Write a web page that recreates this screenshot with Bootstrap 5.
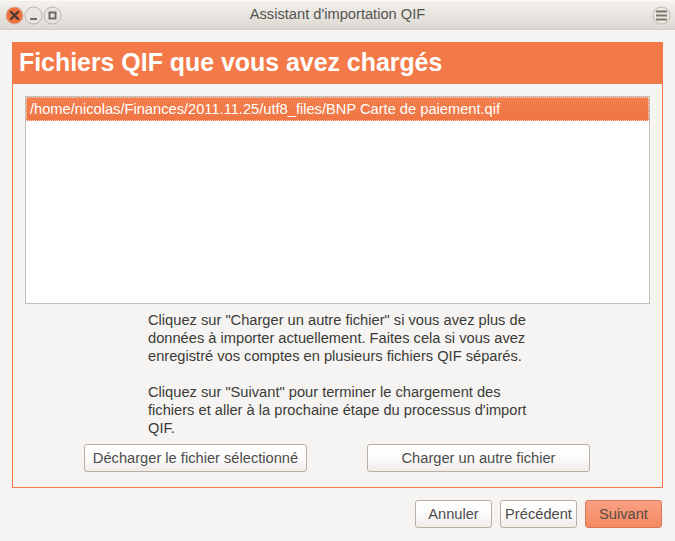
<!DOCTYPE html>
<html lang="fr">
<head>
<meta charset="utf-8">
<title>Assistant d'importation QIF</title>
<link rel="stylesheet" href="https://cdn.jsdelivr.net/npm/bootstrap@5.3.0/dist/css/bootstrap.min.css">
<style>
html,body{height:100%;margin:0}
body{background:#f5f4f2;font-family:"Liberation Sans",Arial,sans-serif;font-size:14.67px;color:#3c3c3c;overflow:hidden}
.win{width:675px;height:541px}
.tbar{height:30px;background:linear-gradient(#f3f1ee,#dcd8d1);border-bottom:1px solid #d3cec7;border-top:1px solid #fbfaf9;border-radius:5px 5px 0 0;padding:0 4px 0 5px;position:relative}
.ttl{position:absolute;left:0;right:0;top:4px;text-align:center;color:#56544f;font-size:14.67px;line-height:18px}
.wbtn{width:19px;height:19px;flex:none;display:block}
.wrap{padding:12px 12px 0 12px}
.panel{width:651px;height:446px;border:1px solid #f37a48;border-top:0}
.phead{height:42px;margin:0 -1px;background:#f37a48;color:#fff;font-weight:700;font-size:24.9px;line-height:40px;padding-left:7px}
.flist{margin:12px 12px 0 12px;height:208px;background:#fff;border:1px solid #c4c0ba;padding:0}
.frow{height:24px;background:linear-gradient(#f37f4f,#ef7543);outline:1px dotted #f7d9ca;outline-offset:-1px;color:#fff;line-height:25px;padding-left:4px;font-size:14.67px}
.info{width:390px;margin:7px 0 0 135px;line-height:18px;color:#3c3b37}
.info p{margin:0 0 18px}
.info p:last-child{margin:0}
.bbar{margin:7px 0 0 71px;gap:60px}
.gbtn{height:28px;border:1px solid #b9aea2;border-radius:3px;background:linear-gradient(#fff 0,#fbfaf9 55%,#efece8 100%);color:#4c4c4c;font-size:14.67px;line-height:26px;padding:0;text-align:center;box-shadow:none}
.w223{width:223px}
.w77{width:77px}
.acts{margin:12px 0 0 403px;gap:8px}
.gbtn.nxt{background:linear-gradient(#f9a183,#f58a61);border-color:#d4795a;color:#5a4a44}
</style>
</head>
<body>
<div class="win d-flex flex-column">
  <div class="tbar d-flex align-items-center">
    <span class="ttl">Assistant d'importation QIF</span>
    <svg class="wbtn" viewBox="0 0 19 19"><circle cx="9.5" cy="9.5" r="8.5" fill="#f0703f" stroke="#d6b5a3"/><path d="M6 6l7 7M13 6l-7 7" stroke="#4b3a33" stroke-width="2.4" stroke-linecap="round"/></svg>
    <svg class="wbtn" viewBox="0 0 19 19"><circle cx="9.5" cy="9.5" r="8.5" fill="#e9e6e1" stroke="#b9b4ac"/><path d="M6 13h7" stroke="#6f6b64" stroke-width="2"/></svg>
    <svg class="wbtn" viewBox="0 0 19 19"><circle cx="9.5" cy="9.5" r="8.5" fill="#e9e6e1" stroke="#b9b4ac"/><rect x="6.5" y="6.5" width="6" height="6" fill="none" stroke="#6f6b64" stroke-width="2"/></svg>
    <svg class="wbtn ms-auto" viewBox="0 0 19 19"><circle cx="9.5" cy="9.5" r="8.5" fill="#ebe8e3" stroke="#b9b4ac"/><path d="M4 5.5h11M4 9.5h11M4 13.5h11" stroke="#7b766e" stroke-width="2"/></svg>
  </div>
  <div class="wrap">
    <div class="panel">
      <div class="phead">Fichiers QIF que vous avez chargés</div>
      <div class="flist"><div class="frow">/home/nicolas/Finances/2011.11.25/utf8_files/BNP Carte de paiement.qif</div></div>
      <div class="info">
        <p>Cliquez sur "Charger un autre fichier" si vous avez plus de<br>données à importer actuellement. Faites cela si vous avez<br>enregistré vos comptes en plusieurs fichiers QIF séparés.</p>
        <p>Cliquez sur "Suivant" pour terminer le chargement des<br>fichiers et aller à la prochaine étape du processus d'import<br>QIF.</p>
      </div>
      <div class="bbar d-flex">
        <button type="button" class="btn gbtn w223">Décharger le fichier sélectionné</button>
        <button type="button" class="btn gbtn w223">Charger un autre fichier</button>
      </div>
    </div>
    <div class="acts d-flex">
      <button type="button" class="btn gbtn w77">Annuler</button>
      <button type="button" class="btn gbtn w77">Précédent</button>
      <button type="button" class="btn gbtn w77 nxt">Suivant</button>
    </div>
  </div>
</div>
</body>
</html>
